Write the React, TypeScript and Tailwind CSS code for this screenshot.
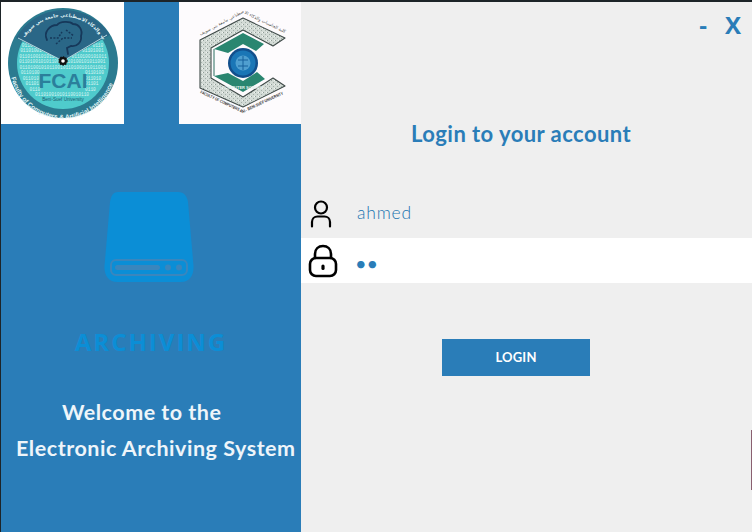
import { useState } from 'react';

const BINARY = '0110100101011001011010010101100101101001';

// rows of 0s and 1s that fill the teal part of the logo, left and right of the V and the FCAI letters
function binaryRows() {
  const rows: { x: number; y: number; text: string }[] = [];
  for (let y = 30; y <= 96; y += 5.5) {
    const half = Math.sqrt(44 * 44 - (y - 62) * (y - 62));
    let ranges = [[63 - half, 63 + half]];
    if (y < 62) {
      const gap = (62 - y) * 1.9;
      ranges = [[63 - half, 63 - gap], [63 + gap, 63 + half]];
    } else if (y > 71 && y < 92) {
      ranges = [[63 - half, 41], [85, 63 + half]];
    }
    ranges.forEach(([a, b]) => {
      const count = Math.floor((b - a) / 2.7);
      if (count > 0) rows.push({ x: a, y, text: BINARY.slice(0, count) });
    });
  }
  return rows;
}

function FcaiLogo() {
  return (
    <svg viewBox="1 2 123 122" className="h-[122px] w-[123px]">
      <rect x="0" y="0" width="124" height="124" fill="#ffffff" />
      <circle cx="63" cy="63" r="55" fill="#2b7b90" />
      <circle cx="63" cy="63" r="46" fill="#4fcbcc" />
      {binaryRows().map((r) => (
        <text key={`${r.x}-${r.y}`} x={r.x} y={r.y} fontSize="4.5" fill="#d6f5f2" fontFamily="Liberation Mono, monospace">
          {r.text}
        </text>
      ))}
      <path d="M16 38 A55 55 0 0 1 110 35 L63 61 Z" fill="#2a6787" />
      <path d="M18 38 L63 61 L107 35" fill="none" stroke="#d8f2f2" strokeWidth="0.8" />
      <path
        d="M47 40 C43 32 50 25 57 25 C60 21 70 21 73 24 C79 24 83 30 81 36 C82 42 77 47 71 46 L67 48 L68 54"
        fill="none"
        stroke="#16385a"
        strokeWidth="1.8"
        strokeLinecap="round"
      />
      <path d="M50 38 H58 L62 32 M56 44 L63 38 H72 M66 30 L74 36" fill="none" stroke="#16385a" strokeWidth="1.5" strokeDasharray="2 1.4" />
      <circle cx="63" cy="61" r="4" fill="#111111" stroke="#111111" strokeWidth="1.4" strokeDasharray="1.4 1.2" />
      <circle cx="63" cy="61" r="1.8" fill="#ffffff" />
      <text x="63" y="88" textAnchor="middle" fontSize="21" fontWeight="700" fill="#2b7f9b" fontFamily="Liberation Sans, sans-serif">
        FCAI
      </text>
      <text x="63" y="101" textAnchor="middle" fontSize="4.6" fill="#1c5a70" fontFamily="Liberation Sans, sans-serif">
        Beni-Suef University
      </text>
      <path id="fcai-bottom" d="M10 66 A53 53 0 0 0 116 66" fill="none" />
      <text fontSize="6.4" fontWeight="700" fill="#e2f4f6" fontFamily="Liberation Sans, sans-serif">
        <textPath href="#fcai-bottom" startOffset="7%">
          Faculty of Computers &amp; Artificial Intelligence
        </textPath>
      </text>
      <path id="fcai-top" d="M23 40 A46 46 0 0 1 103 40" fill="none" />
      <text fontSize="4.8" fontWeight="700" fill="#e2f4f6" fontFamily="DejaVu Sans, sans-serif">
        <textPath href="#fcai-top" startOffset="3%">
          كلية الحاسبات والذكاء الاصطناعي جامعة بني سويف
        </textPath>
      </text>
    </svg>
  );
}

function ComputersLogo() {
  return (
    <svg viewBox="0 2 122 122" className="h-[122px] w-[122px]">
      <defs>
        <pattern id="speckle" width="4" height="4" patternUnits="userSpaceOnUse">
          <rect width="4" height="4" fill="#d3dbd6" />
          <rect x="0" y="0" width="1" height="1" fill="#8f9d97" />
          <rect x="2" y="2" width="1" height="1" fill="#a3afa9" />
          <rect x="3" y="0" width="1" height="1" fill="#f2f5f2" />
        </pattern>
      </defs>
      <rect x="0" y="0" width="122" height="124" fill="#fdfbfd" />
      <path
        d="M21 40 L64 18 L106 38 L94 46 L64 30 L32 48 L32 78 L64 97 L94 78 L106 86 L64 107 L21 88 Z"
        fill="url(#speckle)"
        stroke="#3f4a48"
        strokeWidth="1.1"
        strokeLinejoin="round"
      />
      <path d="M35 49 L64 33 L85 44 L77 51 L64 44 L49 53 Z" fill="#2a8670" />
      <path d="M35 76 L64 92 L86 79 L78 72 L64 81 L49 73 Z" fill="#2a8670" />
      <path d="M35 49 V76" stroke="#2a6f60" strokeWidth="1" />
      <circle cx="64" cy="63" r="15" fill="#124f8c" />
      <circle cx="64" cy="63" r="12.5" fill="#1a76b6" />
      <circle cx="64" cy="63" r="7.5" fill="#4f9fd0" />
      <path d="M64 56 V70 M59 60 H69 M59 66 H69" stroke="#17609c" strokeWidth="1" />
      <path id="dept-top" d="M17 38 L64 13 L110 35" fill="none" />
      <text fontSize="4.4" fill="#4c4c4c" fontFamily="DejaVu Sans, sans-serif">
        <textPath href="#dept-top" startOffset="5%">
          كلية الحاسبات والذكاء الاصطناعي جامعة بني سويف
        </textPath>
      </text>
      <path id="dept-bottom" d="M21 93 L64 113 L107 93" fill="none" />
      <text fontSize="4.2" fontWeight="700" fill="#2f2f2f" fontFamily="Liberation Sans, sans-serif">
        <textPath href="#dept-bottom" textLength="92" lengthAdjust="spacingAndGlyphs">
          FACULTY OF COMPUTERS &amp; AI - BENI-SUEF UNIVERSITY
        </textPath>
      </text>
      <text x="64" y="89" textAnchor="middle" fontSize="4" fontWeight="700" fill="#e6f2ee" fontFamily="Liberation Sans, sans-serif">
        COMPUTER SCIENCE
      </text>
    </svg>
  );
}

function DriveIcon() {
  return (
    <svg viewBox="0 0 90 92" className="mr-[5px] h-[92px] w-[90px]">
      <path
        d="M14 0 H74 C80 0 83 4 84 10 L89.5 74 C90 84 85 90 77 90 H13 C5 90 0 84 0.5 74 L6 10 C7 4 9 0 14 0 Z"
        fill="#0b8ed6"
      />
      <rect x="7" y="68" width="76" height="15" rx="5" fill="none" stroke="#3a86bd" strokeWidth="2" />
      <rect x="11" y="73" width="45" height="5" rx="2.5" fill="#3a86bd" />
      <circle cx="64" cy="75.5" r="3" fill="#3a86bd" />
      <circle cx="75" cy="75.5" r="3" fill="#3a86bd" />
    </svg>
  );
}

export default function App() {
  const [username, setUsername] = useState('ahmed');
  const [password, setPassword] = useState('12');

  return (
    <div className="relative flex h-[532px] w-[752px] overflow-hidden border-t-2 border-l border-[#1d2428] bg-[#efefef] font-['Lato',sans-serif]">
      <aside className="flex w-[300px] shrink-0 flex-col bg-[#2a7db8]">
        <div className="flex justify-between">
          <FcaiLogo />
          <ComputersLogo />
        </div>
        <div className="mt-[68px] flex justify-center">
          <DriveIcon />
        </div>
        <h2 className="mt-[43px] text-center text-[24px] leading-[30px] font-bold tracking-[2px] text-[#0b8ed6] font-['Open_Sans',sans-serif]">
          ARCHIVING
        </h2>
        <p className="mt-[37px] ml-[61px] text-[21.5px] leading-[36px] font-bold tracking-[0.5px] text-[#eef5fa]">
          Welcome to the
        </p>
        <p className="ml-[15px] text-[21.5px] leading-[36px] font-bold tracking-[0.53px] whitespace-nowrap text-[#eef5fa]">
          Electronic Archiving System
        </p>
      </aside>

      <main className="relative flex flex-1 flex-col">
        <div className="absolute top-[8px] right-[11px] flex items-center gap-[18px] text-[24px] leading-[30px] font-bold text-[#2a7db8] font-['Open_Sans',sans-serif]">
          <button>-</button>
          <button>X</button>
        </div>
        <h1 className="mt-[118px] ml-[110px] text-[22px] leading-[28px] font-bold tracking-[0.45px] text-[#2a7db8]">
          Login to your account
        </h1>
        <div className="mt-[42px] flex h-[48px] items-center">
          <svg viewBox="0 0 28 28" className="ml-[6px] h-[28px] w-[28px]" fill="none" stroke="#000000" strokeWidth="2.2" strokeLinecap="round">
            <circle cx="14" cy="7.5" r="6" />
            <path d="M5 26.5 V22 C5 18.5 7.5 16.5 10.5 16.5 H17.5 C20.5 16.5 23 18.5 23 22 V26.5" />
          </svg>
          <input
            value={username}
            onChange={(e) => setUsername(e.target.value)}
            className="mb-[2px] ml-[22px] min-w-0 flex-1 bg-transparent text-[17.5px] font-light tracking-[0.8px] text-[#2074b0] outline-none"
          />
        </div>
        <div className="flex h-[45px] items-center bg-white">
          <svg viewBox="0 0 30 34" className="ml-[7px] h-[34px] w-[30px]" fill="none" stroke="#000000" strokeWidth="2.6" strokeLinecap="round">
            <rect x="2" y="14" width="26" height="18" rx="6" />
            <path d="M7 14 V10 C7 5 10.5 2 15 2 C19.5 2 23 5 23 10 V14" />
            <path d="M15 22 V24.5" strokeWidth="3.2" />
          </svg>
          <input
            type="password"
            value={password}
            onChange={(e) => setPassword(e.target.value)}
            className="mt-[5px] ml-[17px] min-w-0 flex-1 bg-transparent text-[20px] text-[#2a7db8] outline-none"
          />
        </div>
        <button className="mt-[56px] ml-[141px] h-[37px] w-[148px] bg-[#2a7db8] text-[13px] font-bold tracking-[0.2px] text-white">
          LOGIN
        </button>
      </main>
      <div className="absolute top-[428px] right-0 h-[60px] w-px bg-[#8a6070]" />
    </div>
  );
}
